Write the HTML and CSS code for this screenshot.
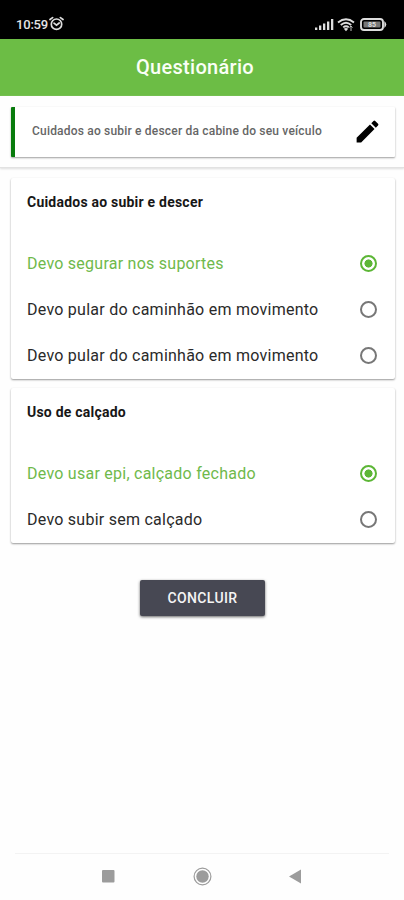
FILE: index.html
```html
<!DOCTYPE html>
<html lang="pt-BR">
<head>
<meta charset="utf-8">
<meta name="viewport" content="width=device-width, initial-scale=1">
<title>Questionário</title>
<link rel="stylesheet" href="styles.css">
</head>
<body>
<div class="status">
  <span class="time">10:59</span>
  <svg class="alarm" width="15" height="16" viewBox="0 0 15 16" fill="none" stroke="#ddd" stroke-width="1.700" stroke-linecap="round"><circle cx="7.500" cy="8.200" r="5.200"/><path d="M1 3.500 3.600 1.600M14 3.500l-2.600-1.900M5 7.200l2.500 2 2.700-2.200"/></svg>
  <svg class="signals" width="74" height="18" viewBox="0 0 74 18">
    <path fill="#ddd" d="M1 12.500h2.300V15H1zM5 10.500h2.300V15H5zM9 8.500h2.300V15H9zM13 6.500h2.300V15H13zM17 4h2.300v11H17z"/>
    <g fill="none" stroke="#ddd" stroke-width="1.900"><path d="M24 7.500q8-6.500 16 0M26.800 10q5.200-4.500 10.400 0M29.200 12.400q2.800-2.400 5.600 0"/></g>
    <path fill="#ddd" d="m29.800 13.700 2.200 2.500 2.200-2.500q-2.200-1.500-4.400 0z"/><path d="M37 11v5m-1.500-3.500L37 11l1.500 1.500" fill="none" stroke="#bbb"/>
    <rect x="47" y="4" width="22" height="11" rx="3" fill="none" stroke="#ddd" stroke-width="1.900"/>
    <rect x="49.500" y="6.400" width="17" height="6.200" rx="1" fill="#777"/><path d="M70.300 6q4 3.500 0 7z" fill="#ddd"/>
    <text class="charge" x="58" y="12.300" text-anchor="middle">85</text>
  </svg>
</div>
<header class="bar"><h1>Questionário</h1></header>
<section class="topic">
  <div class="topic-card"><span>Cuidados ao subir e descer da cabine do seu veículo</span>
    <svg width="29" height="29" viewBox="0 0 24 24"><path d="M3 17.250V21h3.750L17.810 9.940l-3.750-3.750zM20.710 7.040a1 1 0 0 0 0-1.410l-2.340-2.340a1 1 0 0 0-1.410 0l-1.830 1.830 3.750 3.750z"/></svg>
  </div>
</section>
<main>
  <section class="card">
    <h2>Cuidados ao subir e descer</h2>
    <div class="option on"><span>Devo segurar nos suportes</span><i class="radio"></i></div>
    <div class="option"><span>Devo pular do caminhão em movimento</span><i class="radio"></i></div>
    <div class="option"><span>Devo pular do caminhão em movimento</span><i class="radio"></i></div>
  </section>
  <section class="card">
    <h2>Uso de calçado</h2>
    <div class="option on"><span>Devo usar epi, calçado fechado</span><i class="radio"></i></div>
    <div class="option"><span>Devo subir sem calçado</span><i class="radio"></i></div>
  </section>
  <button class="done">CONCLUIR</button>
</main>
<nav>
  <svg width="374" height="46" viewBox="0 0 374 46" fill="#9c9c9c"><rect x="87" y="16" width="12.500" height="12.500" rx="1"/><circle cx="187.500" cy="22.500" r="6.200"/><circle cx="187.500" cy="22.500" r="8.400" fill="none" stroke="#9c9c9c" stroke-width="1.200"/><path d="M286 15.500v14l-12-7z"/></svg>
</nav>
</body>
</html>
```
FILE: styles.css
```css
* { box-sizing: border-box; }
body { margin: 0; height: 900px; display: flex; flex-direction: column; background: #fefefe; font-family: Roboto, sans-serif; color: #222; overflow: hidden; }
.status { height: 38.500px; flex: none; background: #000; color: #e4e4e4; display: flex; align-items: center; padding: 10px 16px 0; }
.time { font-size: 13px; font-weight: 500; letter-spacing: -.2px; width: 33px; }
.signals { margin-left: auto; }
.charge { font-size: 7px; font-weight: 700; fill: #ddd; }
.bar { height: 57.900px; flex: none; background: #6cbd45; display: flex; align-items: center; justify-content: center; padding-right: 14px; }
h1 { margin: 0; font-size: 20px; line-height: 24px; font-weight: 500; color: #fafff6; letter-spacing: .3px; }
.topic { height: 71.600px; flex: none; padding: 10.600px 9px 10px 11px; border-bottom: 1px solid #e2e2e2; box-shadow: 0 1px 2px #ddd; }
.topic-card { height: 50px; border-left: 4px solid #087b0c; display: flex; align-items: center; justify-content: space-between; padding: 0 13px 2px 17px; background: #fff; box-shadow: 0 1px 2px rgba(0,0,0,.38); border-radius: 1px; }
.topic-card span { font-size: 12px; font-weight: 500; color: #666; letter-spacing: .19px; }
.topic-card svg { margin-top: 2px; }
main { flex: 1; padding: 10px 9px 0 11px; display: flex; flex-direction: column; align-items: stretch; }
.card { background: #fff; border-radius: 2px; box-shadow: 0 1px 2px rgba(0,0,0,.4); padding: 14px 16px 0; height: 201px; margin-bottom: 9px; }
.card + .card { height: 155px; }
h2 { margin: 0 0 28px; font-size: 14px; line-height: 20px; font-weight: 700; color: #171717; letter-spacing: .22px; }
.option { height: 46.400px; display: flex; align-items: center; justify-content: space-between; font-size: 16px; letter-spacing: .25px; color: #2a2a2a; }
.on { color: #6fb94b; }
.radio { width: 17px; height: 17px; border: 2px solid #777; border-radius: 50%; margin-right: 2px; }
.on .radio { border-color: #5cb636; background: radial-gradient(circle, #5cb636 0 3.800px, #fff 4.300px); }
.done { align-self: center; margin: 28px 1px 0 0; width: 125px; height: 36px; border: 0; padding: 0; border-radius: 2px; background: #474853; color: #f5f5f5; font: 500 14px Roboto, sans-serif; letter-spacing: .35px; box-shadow: 0 1px 3px rgba(0,0,0,.6); }
nav { height: 47px; flex: none; margin: 0 15px; border-top: 1px solid #f3f3f3; }
nav svg { display: block; }
```
